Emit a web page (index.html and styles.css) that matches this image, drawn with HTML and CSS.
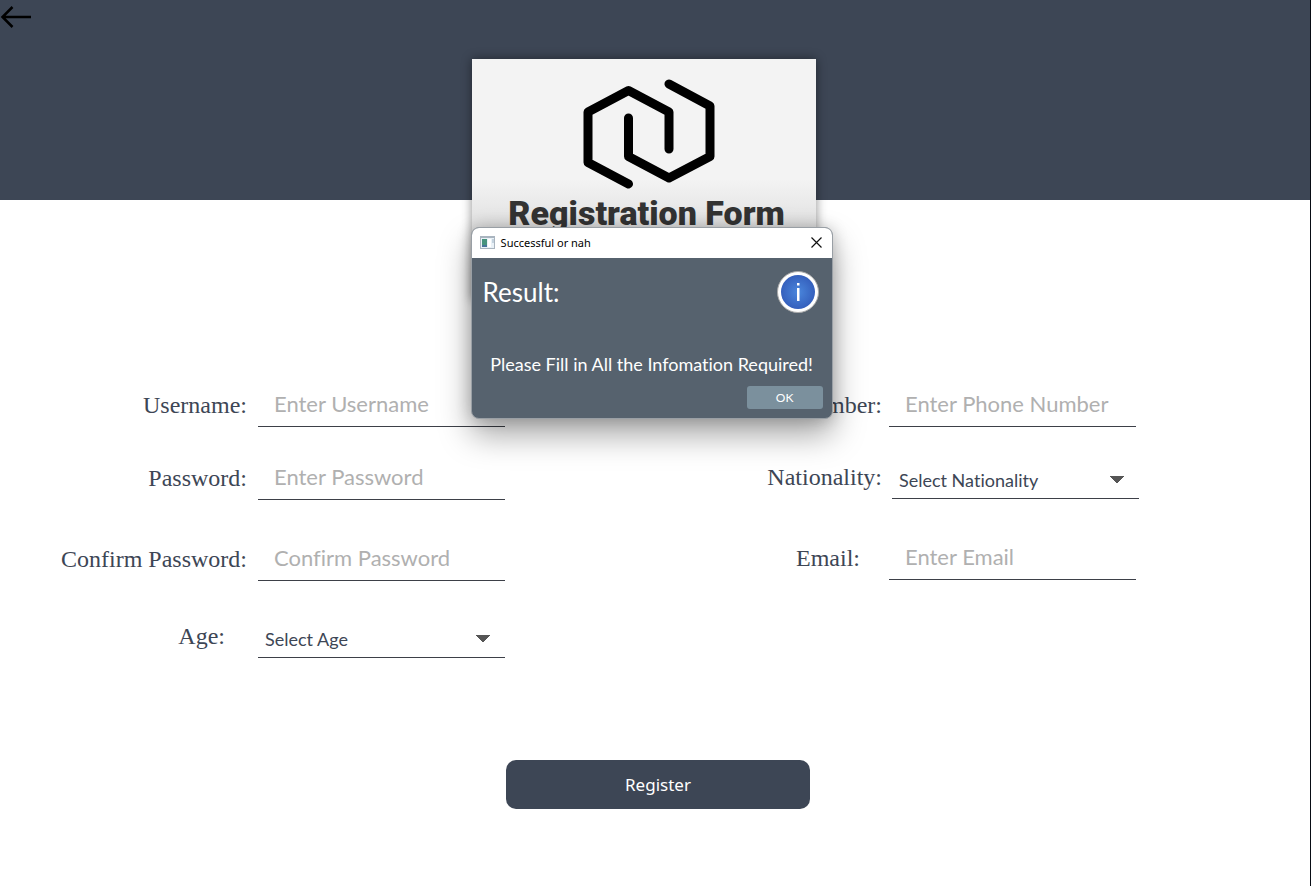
FILE: index.html
```html
<!DOCTYPE html>
<html lang="en">
<head>
<meta charset="utf-8">
<title>Registration Form</title>
<link rel="stylesheet" href="styles.css">
</head>
<body>
<header class="banner">
  <button class="back" type="button" aria-label="Back">
    <svg width="32" height="24" viewBox="0 0 32 24" fill="none" stroke="#000" stroke-width="2.500"><path d="M31 12H2M12.500 2 2.500 12l10 10"/></svg>
  </button>
  <div class="card">
    <svg class="logo" width="132" height="110" viewBox="0 0 132 110" fill="none" stroke="#000" stroke-width="9" stroke-linecap="round" stroke-linejoin="round"><path d="M45.500 105 5 83.500V33L45.500 11.500 86 33V70"/><path d="M86 5 127 27V77.500L86 99 45.500 77.500V39"/></svg>
    <h1 class="title">Registration Form</h1>
    <section class="dialog" role="dialog" aria-labelledby="dialog-title">
      <div class="titlebar">
        <svg width="15" height="13" viewBox="0 0 15 13"><path fill="#a9b4bf" d="M0 0h15v13H0z"/><path fill="#e9f1f7" d="M1 2h13v10H1z"/><path fill="#46937d" d="M2 3h5v8H2z"/><path fill="#47759a" d="M2 9h5v2H2z"/><path fill="#fff" d="M8 3h3v8H8z"/><path fill="#c3d2de" d="M12 3h2v4h-2z"/></svg>
        <span id="dialog-title">Successful or nah</span>
        <button class="close" type="button" aria-label="Close">
          <svg width="11" height="11" viewBox="0 0 11 11" fill="none" stroke="#111" stroke-width="1.200"><path d="m.5.5 10 10M10.500.5l-10 10"/></svg>
        </button>
      </div>
      <div class="result">
        <h2 class="result-title">Result:</h2>
        <svg width="42" height="42" viewBox="0 0 42 42"><defs><radialGradient id="blue"><stop offset="0" stop-color="#4a86dc"/><stop offset="1" stop-color="#3560bd"/></radialGradient></defs><circle cx="21" cy="21" r="20.500" fill="#fff" stroke="#aaa"/><circle cx="21" cy="21" r="17" fill="url(#blue)"/><path fill="#fff" d="M20 17h2.500v13H20zM20 12h2.500v2.500H20z"/></svg>
      </div>
      <p class="message">Please Fill in All the Infomation Required!</p>
      <div class="actions"><button class="ok" type="button">OK</button></div>
    </section>
  </div>
</header>
<form class="form">
  <div class="columns">
    <div class="fields">
      <label for="username">Username:</label>
      <input id="username" type="text" placeholder="Enter Username">
      <label for="password">Password:</label>
      <input id="password" type="password" placeholder="Enter Password">
      <label for="confirm">Confirm Password:</label>
      <input id="confirm" type="password" placeholder="Confirm Password">
      <label class="short" for="age">Age:</label>
      <select id="age"><option>Select Age</option></select>
    </div>
    <div class="fields fields-right">
      <label for="phone">Phone Number:</label>
      <input id="phone" type="tel" placeholder="Enter Phone Number">
      <label for="nationality">Nationality:</label>
      <select id="nationality"><option>Select Nationality</option></select>
      <label class="short" for="email">Email:</label>
      <input id="email" type="email" placeholder="Enter Email">
    </div>
  </div>
  <div class="submit"><button class="register" type="button">Register</button></div>
</form>
</body>
</html>
```
FILE: styles.css
```css
* {
  box-sizing: border-box;
}

body {
  margin: 0;
  min-height: 100vh;
  border-right: 1px solid #080c14;
  background: #fff;
  color: #3d4655;
  font-family: Lato, sans-serif;
  font-variant-ligatures: none;
}

button,
input,
select {
  border: 0;
  padding: 0;
  background: none;
  color: inherit;
  font-family: inherit;
  font-variant-ligatures: inherit;
}

svg {
  display: block;
}

.banner {
  height: 200px;
  background: #3d4655;
}

.back {
  display: block;
  padding-top: 5px;
  height: 29px;
}

.card {
  position: relative;
  width: 344px;
  height: 241px;
  margin: 30px 0 0 36%;
  padding-top: 20px;
  background: linear-gradient(#f3f3f3 50%, #dcdcdc 75%);
  box-shadow: 0 0 10px rgba(0, 0, 0, 0.45);
}

.logo {
  margin-left: 111px;
}

.title {
  margin: 4px 0 0;
  padding-left: 6px;
  color: #333;
  font: 900 34px/40px Roboto, sans-serif;
  text-align: center;
  white-space: nowrap;
}

.dialog {
  position: absolute;
  top: 168px;
  left: -1px;
  width: 362px;
  border: 1px solid #999fa5;
  border-radius: 8px;
  overflow: hidden;
  background: #56626e;
  color: #fff;
  box-shadow: 0 16px 32px rgba(0, 0, 0, 0.35), 0 0 16px rgba(0, 0, 0, 0.2);
}

.titlebar {
  display: flex;
  align-items: center;
  gap: 6px;
  height: 30px;
  padding: 0 10px 2px 8px;
  background: #fff;
  color: #000;
  font: 11px "Noto Sans", sans-serif;
}

.close {
  margin-left: auto;
}

.result {
  display: flex;
  justify-content: space-between;
  align-items: center;
  height: 68px;
  padding: 0 13px 0 11px;
}

.result-title {
  margin: 0;
  font-size: 26px;
  font-weight: 400;
}

.message {
  margin: 23px 0 7px;
  font-size: 18px;
  line-height: 30px;
  text-align: center;
  white-space: nowrap;
}

.actions {
  display: flex;
  justify-content: flex-end;
  padding: 0 9px 9px;
}

.ok {
  width: 76px;
  height: 23px;
  border-radius: 3px;
  background: #7b909d;
  font-size: 12px;
}

.form {
  padding-top: 154px;
}

.columns {
  display: grid;
  grid-template-columns: 1fr 1fr;
  padding-right: 40px;
}

.fields {
  display: grid;
  grid-template-columns: 247px 247px;
  grid-template-rows: 73px 73px 81px 77px;
  column-gap: 11px;
  align-items: end;
}

.fields-right {
  grid-template-rows: 73px 72px 81px;
  align-content: start;
  column-gap: 7px;
}

.fields label {
  padding-bottom: 2px;
  font: 24px/40px "Liberation Serif", serif;
  text-align: right;
  white-space: nowrap;
}

.fields .short {
  padding-right: 22px;
}

.fields input,
.fields select {
  width: 100%;
  height: 42px;
  border-bottom: 1px solid #3d4048;
  border-radius: 0;
}

.fields input {
  padding: 0 16px 4px;
  font-size: 22px;
}

.fields input::placeholder {
  color: #b0b0b0;
}

.fields select {
  height: 38px;
  padding: 0 7px;
  appearance: none;
  background:
    linear-gradient(to bottom right, #555 50%, transparent 51%) no-repeat right 15px center / 7px 7px,
    linear-gradient(to bottom left, #555 50%, transparent 51%) no-repeat right 22px center / 7px 7px;
  font-size: 18px;
}

.fields-right select {
  margin-left: 3px;
}

.submit {
  display: flex;
  justify-content: center;
  padding: 102px 0 24px 6px;
}

.register {
  width: 304px;
  height: 49px;
  border-radius: 10px;
  background: #3d4655;
  color: #fff;
  font: 17px "Noto Sans", sans-serif;
}
```
